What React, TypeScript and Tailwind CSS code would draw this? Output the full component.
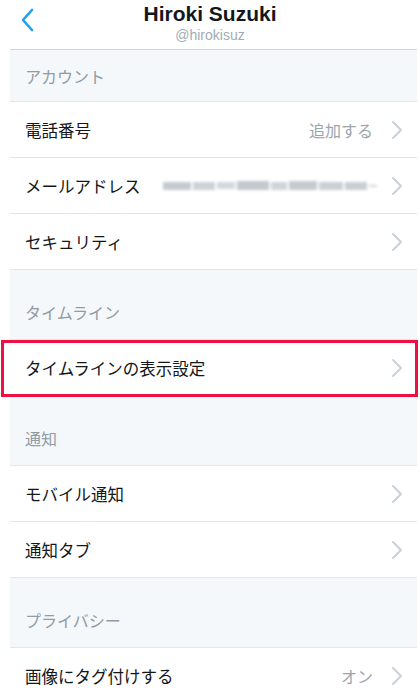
import React from "react";

const jp = { fontFamily: '"Noto Sans CJK JP", "Noto Sans", sans-serif' };
const latin = { fontFamily: '"Liberation Sans", Arial, sans-serif' };

function Chevron() {
  return (
    <svg width="12" height="20" viewBox="0 0 12 20" className="shrink-0">
      <polyline points="2,2 10,10 2,18" fill="none" stroke="#c9d2d9" strokeWidth="2" strokeLinecap="round" strokeLinejoin="round" />
    </svg>
  );
}

function Section({ label, first }: { label: string; first?: boolean }) {
  return (
    <div
      className={`bg-[#f5f8fa] border-b border-[#e1e8ed] flex pl-[15px] ${first ? "h-[52px] items-center" : "h-[70px] items-end pb-[16px]"}`}
    >
      <span className="text-[16px] leading-[22px] text-[#8f9ba5]" style={jp}>
        {label}
      </span>
    </div>
  );
}

function Row({ label, value, email }: { label: string; value?: string; email?: boolean }) {
  return (
    <div className="h-[56px] border-b border-[#e1e8ed] bg-white flex items-center pl-[15px] pr-[14px]">
      <span className="text-[16.5px] leading-[22px] text-[#14171a] whitespace-nowrap" style={jp}>
        {label}
      </span>
      <div className="flex-1 flex items-center justify-end">
        {email && (
          <div className="flex items-center gap-[2px] mr-[14px] blur-[1.5px]">
            <div className="w-[28px] h-[8px] bg-[#c4cad0]" />
            <div className="w-[22px] h-[8px] bg-[#ccd2d6]" />
            <div className="w-[18px] h-[7px] bg-[#d3d8dc]" />
            <div className="w-[32px] h-[9px] bg-[#c2c8cd]" />
            <div className="w-[16px] h-[8px] bg-[#cfd4d8]" />
            <div className="w-[28px] h-[9px] bg-[#c4cad0]" />
            <div className="w-[24px] h-[8px] bg-[#c9cfd3]" />
            <div className="w-[22px] h-[8px] bg-[#c8ced2]" />
            <div className="w-[8px] h-[2px] bg-[#cfd4d8]" />
          </div>
        )}
        {value && (
          <span className="text-[16px] leading-[22px] text-[#9aa5ae] mr-[18px]" style={jp}>
            {value}
          </span>
        )}
        <Chevron />
      </div>
    </div>
  );
}

export default function App() {
  return (
    <div className="w-[420px] h-[690px] overflow-hidden bg-white">
      <div className="relative h-[49px] flex flex-col items-center">
        <div className="absolute left-[20px] top-[8px]">
          <svg width="16" height="24" viewBox="0 0 16 24">
            <polyline points="12,2 3,12 12,22" fill="none" stroke="#1da1f2" strokeWidth="2.6" strokeLinecap="round" strokeLinejoin="round" />
          </svg>
        </div>
        <div className="text-[21px] leading-[24px] font-bold text-[#14171a] mt-[2px]" style={latin}>
          Hiroki Suzuki
        </div>
        <div className="text-[14px] leading-[16px] text-[#a2acb4] mt-[1px]" style={latin}>
          @hirokisuz
        </div>
      </div>
      <div className="ml-[10px] mr-[3px] border-t border-[#cfd7dd]">
        <Section label="アカウント" first />
        <Row label="電話番号" value="追加する" />
        <Row label="メールアドレス" email />
        <Row label="セキュリティ" />
        <Section label="タイムライン" />
        <div className="relative">
          <Row label="タイムラインの表示設定" />
          <div className="absolute -left-[9px] -right-[1px] top-0 bottom-[-1px] border-[3px] border-[#ee1043] pointer-events-none" />
        </div>
        <Section label="通知" />
        <Row label="モバイル通知" />
        <Row label="通知タブ" />
        <Section label="プライバシー" />
        <Row label="画像にタグ付けする" value="オン" />
      </div>
    </div>
  );
}
